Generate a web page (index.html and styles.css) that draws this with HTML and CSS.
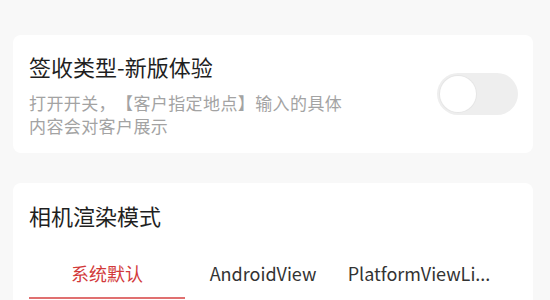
FILE: index.html
```html
<!DOCTYPE html>
<html>
<head>
  <meta charset="UTF-8">
  <title>设置</title>
  <link rel="stylesheet" href="styles.css">
</head>
<body>
  <div class="page">
    <div class="card setting-row">
      <div class="setting-text">
        <div class="setting-title">签收类型-新版体验</div>
        <div class="setting-desc">打开开关，【客户指定地点】输入的具体内容会对客户展示</div>
      </div>
      <div class="switch"><span class="switch-knob"></span></div>
    </div>

    <div class="card render-card">
      <div class="setting-title">相机渲染模式</div>
      <div class="tabs">
        <div class="tab active">系统默认</div>
        <div class="tab">AndroidView</div>
        <div class="tab">PlatformViewLi...</div>
      </div>
    </div>
  </div>
</body>
</html>
```

FILE: styles.css
```css
body {
  margin: 0;
  background-color: #f8f8f8;
  font-family: "Noto Sans CJK SC", "Noto Sans", sans-serif;
  overflow: hidden;
}

.page {
  padding: 35px 17px 0 13px;
  display: flex;
  flex-direction: column;
  gap: 30px;
}

.card {
  background-color: #ffffff;
  border-radius: 8px;
}

.setting-row {
  display: flex;
  align-items: center;
  justify-content: space-between;
  padding: 16px 15px 16px 16px;
  height: 86px;
}

.setting-text {
  width: 322px;
}

.setting-title {
  font-size: 22px;
  line-height: 30px;
  color: #1f1f1f;
}

.setting-desc {
  margin-top: 10px;
  font-size: 17px;
  line-height: 23px;
  letter-spacing: 0.4px;
  color: #a3a3a3;
  text-spacing-trim: space-all;
}

.switch {
  width: 81px;
  height: 42px;
  border-radius: 21px;
  background-color: #eeeeee;
  display: flex;
  align-items: center;
  padding-left: 3px;
  box-sizing: border-box;
}

.switch-knob {
  width: 36px;
  height: 36px;
  border-radius: 50%;
  background-color: #ffffff;
  box-shadow: 0 0 0 1px #e6e6e6;
}

.render-card {
  padding: 17px 16px 0 16px;
  height: 140px;
}

.tabs {
  display: grid;
  grid-template-columns: 156px 156px 156px;
  margin-top: 31px;
}

.tab {
  font-size: 18px;
  line-height: 24px;
  color: #333333;
  text-align: center;
  padding: 0 4px 12px 4px;
  white-space: nowrap;
  overflow: hidden;
  border-bottom: 2px solid transparent;
}

.tab.active {
  color: #d23a3a;
  border-bottom-color: #e07070;
}
```
